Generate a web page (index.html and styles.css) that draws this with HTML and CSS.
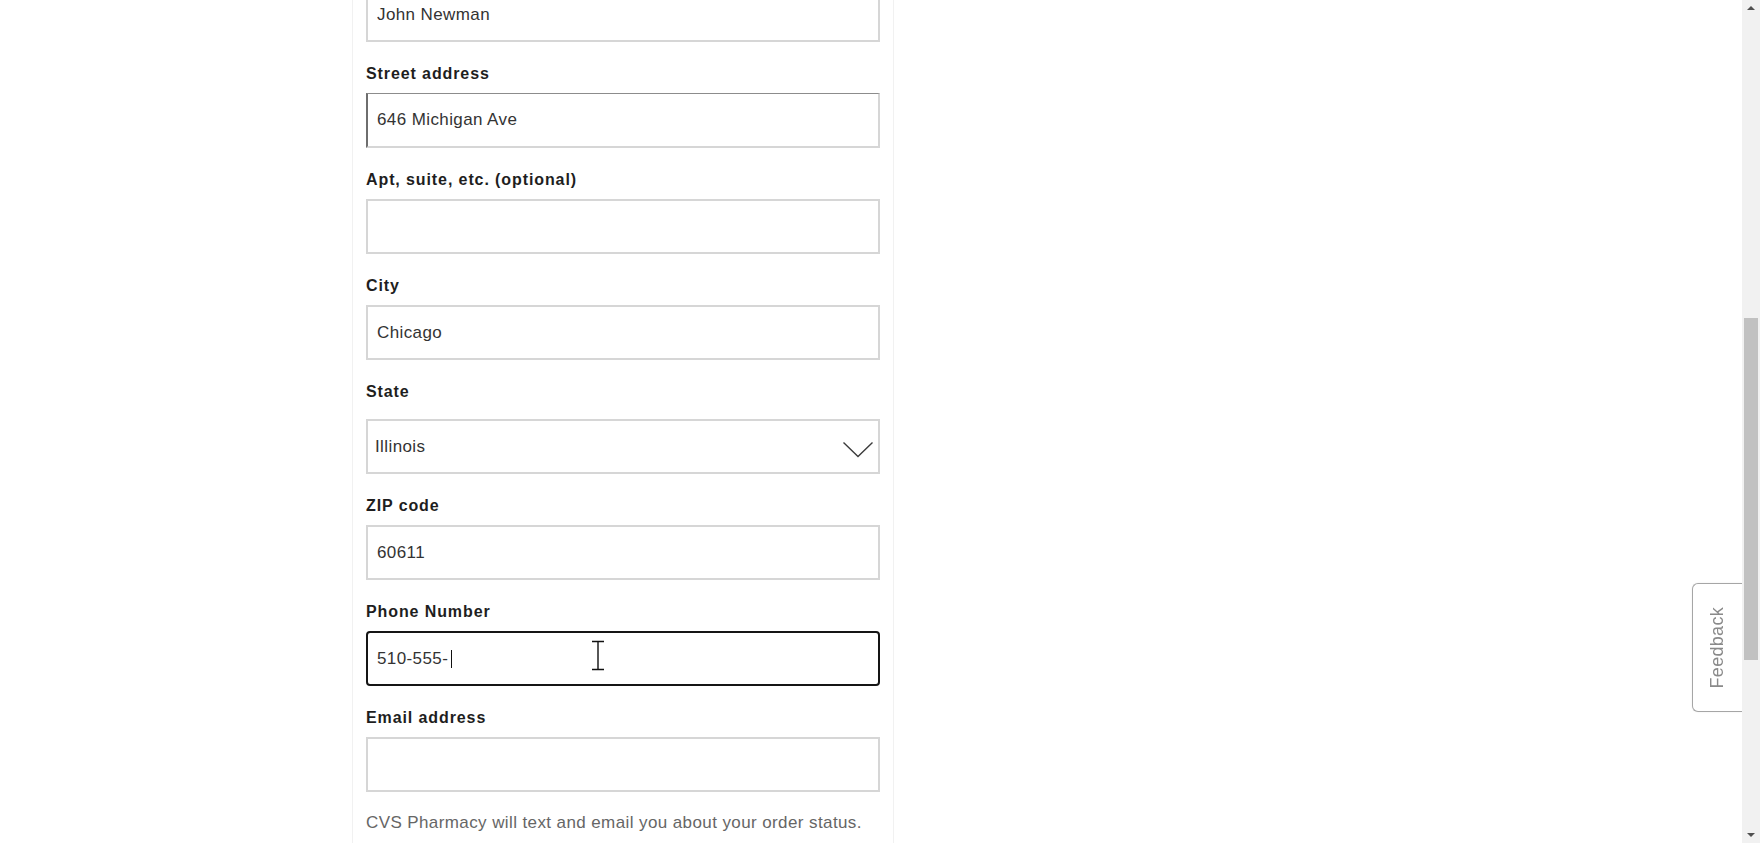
FILE: index.html
```html
<!DOCTYPE html>
<html lang="en">
<head>
    <meta charset="UTF-8">
    <meta name="viewport" content="width=device-width, initial-scale=1.0">
    <title>Shipping address</title>

    <link rel="stylesheet" href="styles.css">
</head>
<body>
    <div class="page">
        <section class="shipping">
            <div class="field field-first">
                <input type="text" class="box" value="John Newman"/>
            </div>
            <div class="field">
                <label class="label" for="street">Street address</label>
                <input type="text" id="street" class="box box-recent" value="646 Michigan Ave"/>
            </div>
            <div class="field">
                <label class="label" for="apt">Apt, suite, etc. (optional)</label>
                <input type="text" id="apt" class="box"/>
            </div>
            <div class="field">
                <label class="label" for="city">City</label>
                <input type="text" id="city" class="box" value="Chicago"/>
            </div>
            <div class="field field-select">
                <label class="label" for="state">State</label>
                <div class="wrap">
                    <select id="state" class="box box-select">
                        <option>Illinois</option>
                    </select>
                    <svg class="chevron" width="32" height="17" viewBox="0 0 32 17">
                        <path d="M1.5 1.5 L16 15.5 L30.5 1.5" fill="none" stroke="#3c3c3c" stroke-width="1.4"/>
                    </svg>
                </div>
            </div>
            <div class="field">
                <label class="label" for="zip">ZIP code</label>
                <input type="text" id="zip" class="box" value="60611"/>
            </div>
            <div class="field">
                <label class="label" for="phone">Phone Number</label>
                <div class="wrap">
                    <input type="tel" id="phone" class="box box-focus" value="510-555-"/>
                    <span class="caret"></span>
                    <svg class="ibeam" width="14" height="31" viewBox="0 0 14 31">
                        <path d="M1 1.5 H13 M7 1.5 V29.5 M1 29.5 H13" fill="none" stroke="#fff" stroke-width="3"/>
                        <path d="M1 1.5 H13 M7 1.5 V29.5 M1 29.5 H13" fill="none" stroke="#111" stroke-width="1.4"/>
                    </svg>
                </div>
            </div>
            <div class="field">
                <label class="label" for="email">Email address</label>
                <input type="email" id="email" class="box"/>
            </div>
            <p class="note">CVS Pharmacy will text and email you about your order status.</p>
        </section>
    </div>

    <button type="button" class="feedback"><span>Feedback</span></button>

    <div class="scrollbar">
        <span class="arrow arrow-up"></span>
        <span class="thumb"></span>
        <span class="arrow arrow-down"></span>
    </div>
</body>
</html>
```

FILE: styles.css
```css
body{
    margin: 0;
    background-color: #fff;
    font-family: "Liberation Sans", Arial, sans-serif;
    color: #1e1e1e;
    overflow: hidden;
}
.page{
    display: flex;
    padding-left: 352px;
}
.shipping{
    width: 514px;
    min-height: 843px;
    padding: 0 13px;
    border-left: 1px solid #f1f1f1;
    border-right: 1px solid #f1f1f1;
}
.field{
    margin-bottom: 21px;
}
.field-first{
    margin-top: -13px;
}
.label{
    display: block;
    padding-top: 1px;
    font-size: 16px;
    font-weight: bold;
    line-height: 20px;
    letter-spacing: 0.9px;
    margin-bottom: 9px;
}
.field-select .label{
    margin-bottom: 17px;
}
.wrap{
    position: relative;
}
.box{
    display: block;
    box-sizing: border-box;
    width: 100%;
    height: 55px;
    margin: 0;
    padding: 0 9px;
    border: 2px solid #d6d6d6;
    border-radius: 0;
    background-color: #fff;
    font-family: "Liberation Sans", Arial, sans-serif;
    font-size: 17px;
    letter-spacing: 0.4px;
    color: #333;
    outline: none;
}
.box-recent{
    border-color: #8c8c8c #d6d6d6 #d6d6d6 #6e6e6e;
    border-width: 1px 2px 2px 2px;
}
.box-select{
    padding-left: 7px;
    appearance: none;
    -webkit-appearance: none;
}
.chevron{
    position: absolute;
    right: 6px;
    top: 22px;
    pointer-events: none;
}
.box-focus{
    border: 2px solid #151515;
    border-radius: 4px;
}
.caret{
    position: absolute;
    left: 85px;
    top: 19px;
    width: 1px;
    height: 18px;
    background-color: #111;
}
.ibeam{
    position: absolute;
    left: 225px;
    top: 9px;
}
.note{
    margin: 5px 0 0;
    font-size: 17px;
    line-height: 20px;
    letter-spacing: 0.4px;
    color: #666;
}
.feedback{
    position: fixed;
    right: 18px;
    top: 583px;
    width: 50px;
    height: 129px;
    padding: 0;
    display: flex;
    align-items: center;
    justify-content: center;
    border: 1px solid #a6a6a6;
    border-right: none;
    border-radius: 6px 0 0 6px;
    background-color: #fff;
    box-shadow: 0 0 2px rgba(0,0,0,0.08);
}
.feedback span{
    writing-mode: vertical-rl;
    transform: rotate(180deg);
    font-family: "Liberation Sans", Arial, sans-serif;
    font-size: 18px;
    letter-spacing: 0.3px;
    color: #8a8a8a;
}
.scrollbar{
    position: fixed;
    top: 0;
    right: 0;
    width: 18px;
    height: 100vh;
    display: flex;
    flex-flow: column;
    align-items: center;
    background-color: #f1f1f1;
}
.arrow{
    width: 0;
    height: 0;
    border-left: 4px solid transparent;
    border-right: 4px solid transparent;
}
.arrow-up{
    margin-top: 6px;
    border-bottom: 4px solid #505050;
}
.arrow-down{
    margin-top: auto;
    margin-bottom: 6px;
    border-top: 4px solid #505050;
}
.thumb{
    width: 14px;
    height: 342px;
    margin-top: 308px;
    background-color: #c1c1c1;
}
```
